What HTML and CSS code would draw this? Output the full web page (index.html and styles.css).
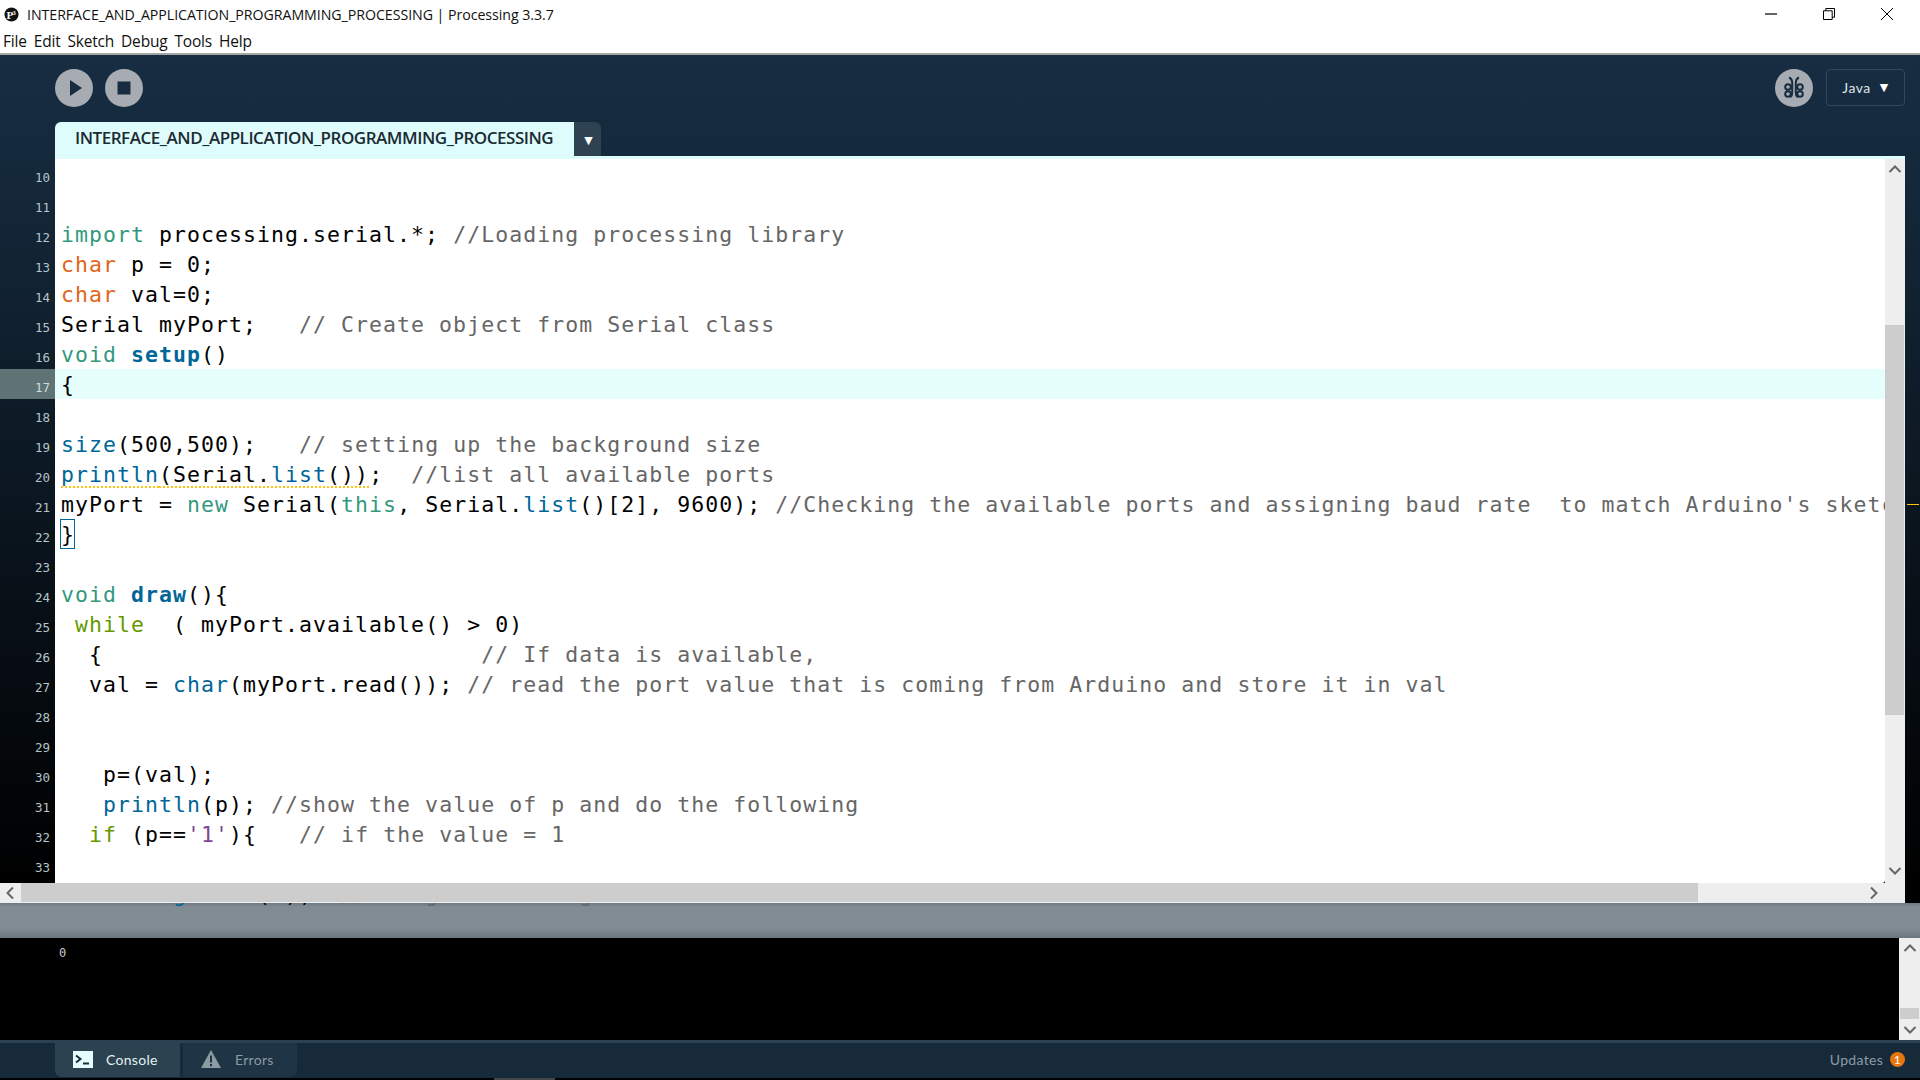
FILE: index.html
```html
<!DOCTYPE html>
<html lang="en">
<head>
<meta charset="utf-8">
<title>Processing 3.3.7</title>
<link rel="stylesheet" href="styles.css">
</head>
<body>
<div class="app">
  <header class="titlebar">
    <svg class="app-icon" viewBox="0 0 16 16"><circle cx="8" cy="8" r="7.5" fill="#111"/><text x="2.6" y="12.5" class="app-icon-text">P</text><text x="9" y="9" class="app-icon-sup">3</text></svg>
    <span class="title-text">INTERFACE_AND_APPLICATION_PROGRAMMING_PROCESSING | Processing 3.3.7</span>
    <div class="winbtns">
      <span class="winbtn"><svg width="14" height="14" viewBox="0 0 14 14"><path d="M1 7h12" stroke="#000" stroke-width="1.2" fill="none"/></svg></span>
      <span class="winbtn"><svg width="14" height="14" viewBox="0 0 14 14"><path d="M1.5 3.8h8.7v8.7H1.500zM3.800 3.800V1.500h8.700v8.700h-2.300" stroke="#000" stroke-width="1" fill="none"/></svg></span>
      <span class="winbtn"><svg width="14" height="14" viewBox="0 0 14 14"><path d="M1 1l12 12M13 1L1 13" stroke="#000" stroke-width="1" fill="none"/></svg></span>
    </div>
  </header>
  <nav class="menubar">
    <span>File</span><span>Edit</span><span>Sketch</span><span>Debug</span><span>Tools</span><span>Help</span>
  </nav>

  <main class="main">
    <div class="toolbar">
      <span class="round"><svg width="38" height="38" viewBox="0 0 38 38"><path d="M15 11l12 8-12 8z" fill="#172c40"/></svg></span>
      <span class="round"><svg width="38" height="38" viewBox="0 0 38 38"><path d="M12.500 12.500h13v13h-13z" fill="#172c40"/></svg></span>
      <span class="toolbar-gap"></span>
      <span class="round"><svg width="38" height="38" viewBox="0 0 38 38" fill="none" stroke="#172c40" stroke-width="2"><circle cx="13" cy="18" r="2.800"/><circle cx="25" cy="18" r="2.800"/><circle cx="13" cy="25" r="2.800"/><circle cx="25" cy="25" r="2.800"/><path d="M14 8.500c2.500 1 3.200 3 3.200 5.500v9c0 2.500-.7 4.500-2 5M24 8.500c-2.500 1-3.200 3-3.200 5.500v9c0 2.500.7 4.500 2 5"/></svg></span>
      <span class="mode">Java <span class="mode-arrow">▼</span></span>
    </div>

    <div class="tabs">
      <span class="tab">INTERFACE_AND_APPLICATION_PROGRAMMING_PROCESSING</span>
      <span class="tab-menu">▼</span>
    </div>
    <div class="tab-band"></div>

    <div class="editor">
      <div class="lines">
        <div class="row"><span class="num">10</span><code class="code"></code></div>
        <div class="row"><span class="num">11</span><code class="code"></code></div>
        <div class="row"><span class="num">12</span><code class="code"><i class="kw">import</i> processing.serial.*; <i class="cm">//Loading processing library</i></code></div>
        <div class="row"><span class="num">13</span><code class="code"><i class="ty">char</i> p = 0;</code></div>
        <div class="row"><span class="num">14</span><code class="code"><i class="ty">char</i> val=0;</code></div>
        <div class="row"><span class="num">15</span><code class="code">Serial myPort;   <i class="cm">// Create object from Serial class</i></code></div>
        <div class="row"><span class="num">16</span><code class="code"><i class="kw">void</i> <b class="fn">setup</b>()</code></div>
        <div class="row current"><span class="num">17</span><code class="code">{</code></div>
        <div class="row"><span class="num">18</span><code class="code"></code></div>
        <div class="row"><span class="num">19</span><code class="code"><i class="fn">size</i>(500,500);   <i class="cm">// setting up the background size</i></code></div>
        <div class="row"><span class="num">20</span><code class="code"><span class="warn"><i class="fn">println</i>(Serial.<i class="fn">list</i>())</span>;  <i class="cm">//list all available ports</i></code></div>
        <div class="row"><span class="num">21</span><code class="code">myPort = <i class="kw">new</i> Serial(<i class="kw">this</i>, Serial.<i class="fn">list</i>()[2], 9600); <i class="cm">//Checking the available ports and assigning baud rate  to match Arduino's sketch</i></code></div>
        <div class="row"><span class="num">22</span><code class="code"><span class="match">}</span></code></div>
        <div class="row"><span class="num">23</span><code class="code"></code></div>
        <div class="row"><span class="num">24</span><code class="code"><i class="kw">void</i> <b class="fn">draw</b>(){</code></div>
        <div class="row"><span class="num">25</span><code class="code"> <i class="ctl">while</i>  ( myPort.available() &gt; 0)</code></div>
        <div class="row"><span class="num">26</span><code class="code">  {                           <i class="cm">// If data is available,</i></code></div>
        <div class="row"><span class="num">27</span><code class="code">  val = <i class="fn">char</i>(myPort.read()); <i class="cm">// read the port value that is coming from Arduino and store it in val</i></code></div>
        <div class="row"><span class="num">28</span><code class="code"></code></div>
        <div class="row"><span class="num">29</span><code class="code"></code></div>
        <div class="row"><span class="num">30</span><code class="code">   p=(val);</code></div>
        <div class="row"><span class="num">31</span><code class="code">   <i class="fn">println</i>(p); <i class="cm">//show the value of p and do the following</i></code></div>
        <div class="row"><span class="num">32</span><code class="code">  <i class="ctl">if</i> (p==<i class="str">'1'</i>){   <i class="cm">// if the value = 1</i></code></div>
        <div class="row"><span class="num">33</span><code class="code"></code></div>
        <div class="lines-end"></div>
      </div>
      <div class="vscroll">
        <span class="arrow"><svg width="14" height="10" viewBox="0 0 14 10"><path d="M1.500 8L7 2.500 12.500 8" stroke="#666" stroke-width="2" fill="none"/></svg></span>
        <span class="vthumb"></span>
        <span class="arrow arrow-end"><svg width="14" height="10" viewBox="0 0 14 10"><path d="M1.500 2L7 7.500 12.500 2" stroke="#666" stroke-width="2" fill="none"/></svg></span>
      </div>
      <div class="marker-strip"><span class="marker"></span></div>
    </div>

    <div class="hscroll">
      <span class="harrow"><svg width="10" height="14" viewBox="0 0 10 14"><path d="M8 1.500L2.500 7 8 12.500" stroke="#666" stroke-width="2" fill="none"/></svg></span>
      <span class="hthumb"></span>
      <span class="harrow harrow-end"><svg width="10" height="14" viewBox="0 0 10 14"><path d="M2 1.500L7.500 7 2 12.500" stroke="#666" stroke-width="2" fill="none"/></svg></span>
    </div>
  </main>

  <section class="status">
    <div class="status-clip"><code class="code-clipped">    <i class="fn">background</i>(0);  <i class="cm">// long white ring</i></code></div>
  </section>

  <section class="console">
    <div class="console-out">0</div>
    <div class="console-scroll">
      <span class="arrow"><svg width="14" height="10" viewBox="0 0 14 10"><path d="M1.500 8L7 2.500 12.500 8" stroke="#666" stroke-width="2" fill="none"/></svg></span>
      <span class="cthumb"></span>
      <span class="arrow"><svg width="14" height="10" viewBox="0 0 14 10"><path d="M1.500 2L7 7.500 12.500 2" stroke="#666" stroke-width="2" fill="none"/></svg></span>
    </div>
  </section>

  <footer class="footer">
    <div class="ftab ftab-on">
      <svg width="20" height="17" viewBox="0 0 20 17"><path d="M0 0h20v17H0z" fill="#e6fdfd"/><path d="M3 4.500l4.500 3.500-4.500 3.500" stroke="#172c40" stroke-width="2" fill="none"/><path d="M10 12.500h6" stroke="#172c40" stroke-width="2"/></svg>
      <span>Console</span>
    </div>
    <div class="ftab ftab-off">
      <svg width="20" height="18" viewBox="0 0 20 18"><path d="M10 0l10 18H0z" fill="#8b9ba2"/><path d="M10 5.500v7M10 14v2.200" stroke="#1f3444" stroke-width="2"/></svg>
      <span>Errors</span>
    </div>
    <div class="updates"><span>Updates</span><span class="badge">1</span></div>
  </footer>
  <div class="taskbar"><span class="task-item"></span></div>
</div>
</body>
</html>
```
FILE: styles.css
```css
* { box-sizing: border-box; }
html, body { margin: 0; padding: 0; background: #000; }
body { width: 1920px; height: 1080px; overflow: hidden; font-family: "Lato", "Open Sans", sans-serif; }
i, b { font-style: normal; }
.app { display: flex; flex-direction: column; width: 1920px; height: 1080px; }

.titlebar { display: flex; align-items: center; height: 28px; background: #fff; padding-left: 4px; }
.app-icon { width: 15px; height: 15px; flex: none; }
.app-icon-text { font: bold 12px "Liberation Serif", serif; fill: #fff; }
.app-icon-sup { font: bold 7px "Liberation Serif", serif; fill: #fff; }
.title-text { margin-left: 8px; font: 14.2px "Open Sans", sans-serif; letter-spacing: -0.05px; color: #111; }
.winbtns { display: flex; margin-left: auto; padding-right: 4px; }
.winbtn { display: flex; width: 58px; height: 28px; align-items: center; justify-content: center; }

.menubar { display: flex; gap: 7px; height: 27px; background: #fff; padding: 3px 0 0 3px; border-bottom: 2px solid #a5a5a5; font: 15.5px "Open Sans", sans-serif; letter-spacing: -0.2px; color: #111; line-height: 20px; }

.main { display: flex; flex-direction: column; height: 848px; background: linear-gradient(#182d42, #14283a 15%, #000 98%); }

.toolbar { display: flex; align-items: center; gap: 12px; height: 67px; padding: 0 15px 2px 55px; }
.toolbar-gap { flex: 1; }
.round { display: block; flex: none; width: 38px; height: 38px; border-radius: 50%; background: #a6acb2; }
.round svg { display: block; }
.mode { display: flex; align-items: center; justify-content: center; gap: 9px; width: 79px; height: 37px; border: 1px solid #33475a; border-radius: 4px; color: #dfe4e8; font: 14px "Lato", sans-serif; letter-spacing: .5px; margin-left: 1px; }
.mode-arrow { font: 11px "DejaVu Sans", sans-serif; color: #fff; }

.tabs { display: flex; height: 34px; padding-left: 55px; }
.tab { display: block; width: 519px; background: #dffcfc; border-radius: 6px 0 0 0; padding: 4px 0 0 20px; font: 600 17px "Open Sans", sans-serif; letter-spacing: -0.47px; color: #1a2a33; line-height: 24px; white-space: nowrap; }
.tab-menu { display: flex; align-items: center; justify-content: center; width: 27px; background: #2e4251; border-radius: 0 6px 0 0; font: 11px "DejaVu Sans", sans-serif; color: #fff; padding: 2px 0 0 2px; }
.tab-band { height: 3px; margin: 0 15px 0 55px; background: #dffcfc; }

.editor { display: flex; height: 724px; }
.lines { flex: 1; min-width: 0; display: flex; flex-direction: column; }
.row { display: flex; height: 30px; flex: none; }
.num { flex: none; width: 55px; padding: 10px 5px 0 0; text-align: right; font: 12.500px/18px "DejaVu Sans Mono", monospace; color: #b7c4c9; letter-spacing: -0.02px; }
.code { display: block; flex: 1; min-width: 0; height: 30px; overflow: hidden; padding-left: 6px; background: #fff; font: 21.500px/32px "DejaVu Sans Mono", monospace; letter-spacing: 1.06px; color: #000; white-space: pre; }
.row.current .num { background: #5f7374; color: #cfdcdc; }
.row.current .code { background: #e6fefc; }
.lines-end { height: 4px; margin-left: 55px; background: #fff; border-bottom-right-radius: 3px; }

.kw { color: #33997e; }
.ty { color: #e2661a; }
.fn { color: #006699; }
b.fn { font-weight: 700; }
.ctl { color: #669900; }
.str { color: #7d4793; }
.cm { color: #666; }
.warn { text-decoration: underline dotted #ffc30e 2px; text-underline-offset: 4px; text-decoration-skip-ink: none; }
.match { display: inline-block; height: 30px; margin-left: -1px; padding-left: 1px; outline: 1px solid #006699; outline-offset: -1px; }

.vscroll { display: flex; flex-direction: column; flex: none; width: 20px; background: #eee; }
.arrow { display: flex; align-items: center; justify-content: center; flex: none; height: 20px; }
.vthumb { display: block; flex: none; width: 19px; height: 390px; margin-top: 146px; background: #cdcdcd; }
.arrow-end { margin-top: auto; margin-bottom: 2px; }
.marker-strip { flex: none; width: 15px; padding: 345px 0 0 2px; }
.marker { display: block; width: 12px; height: 1px; background: #ffc30e; }

.hscroll { display: flex; height: 20px; width: 1905px; background: #eee; flex: none; }
.harrow { display: flex; align-items: center; justify-content: center; flex: none; width: 19px; margin-right: 2px; }
.hthumb { display: block; width: 1677px; height: 19px; background: #cdcdcd; }
.harrow-end { margin-left: auto; width: 16px; margin-right: 23px; }

.status { height: 35px; background: linear-gradient(#707b84, #818b94 12%, #818b94 75%, #6b757c); overflow: hidden; }
.status-clip { height: 5px; overflow: hidden; }
.code-clipped { display: block; margin-top: -24px; padding-left: 61px; font: 21.500px/32px "DejaVu Sans Mono", monospace; letter-spacing: 1.06px; color: #000; white-space: pre; }

.console { display: flex; height: 102px; background: #000; }
.console-out { flex: 1; padding: 6px 0 0 59px; font: 12px/18px "DejaVu Sans Mono", monospace; color: #ccc; }
.console-scroll { display: flex; flex-direction: column; width: 21px; background: #eee; }
.cthumb { display: block; width: 19px; height: 11px; margin: 50px 0 1px 1px; background: #cdcdcd; }

.footer { display: flex; height: 38px; background: #172a3a; border-top: 3px solid #2c4252; padding-left: 55px; }
.ftab { display: flex; align-items: center; height: 34px; padding-bottom: 2px; }
.ftab-on { width: 125px; margin-right: 3px; padding-left: 18px; gap: 13px; background: #2d4251; border-radius: 0 0 0 7px; color: #e2f2f4; }
.ftab-off { width: 114px; padding-left: 18px; gap: 14px; background: #1f3444; border-radius: 0 0 7px 0; color: #8b9ba2; }
.ftab span { font: 14px "Lato", sans-serif; letter-spacing: .3px; }
.updates { display: flex; align-items: center; gap: 7px; height: 34px; padding-bottom: 2px; margin-left: auto; padding-right: 15px; color: #8b9ba2; font: 14px "Lato", sans-serif; letter-spacing: .3px; }
.badge { display: flex; align-items: center; justify-content: center; width: 15px; height: 15px; border-radius: 50%; background: #e8760f; color: #fff; font: 12px "Lato", sans-serif; }

.taskbar { flex: 1; padding-left: 494px; background: #000; }
.task-item { display: block; width: 61px; height: 2px; background: #444; }
```
